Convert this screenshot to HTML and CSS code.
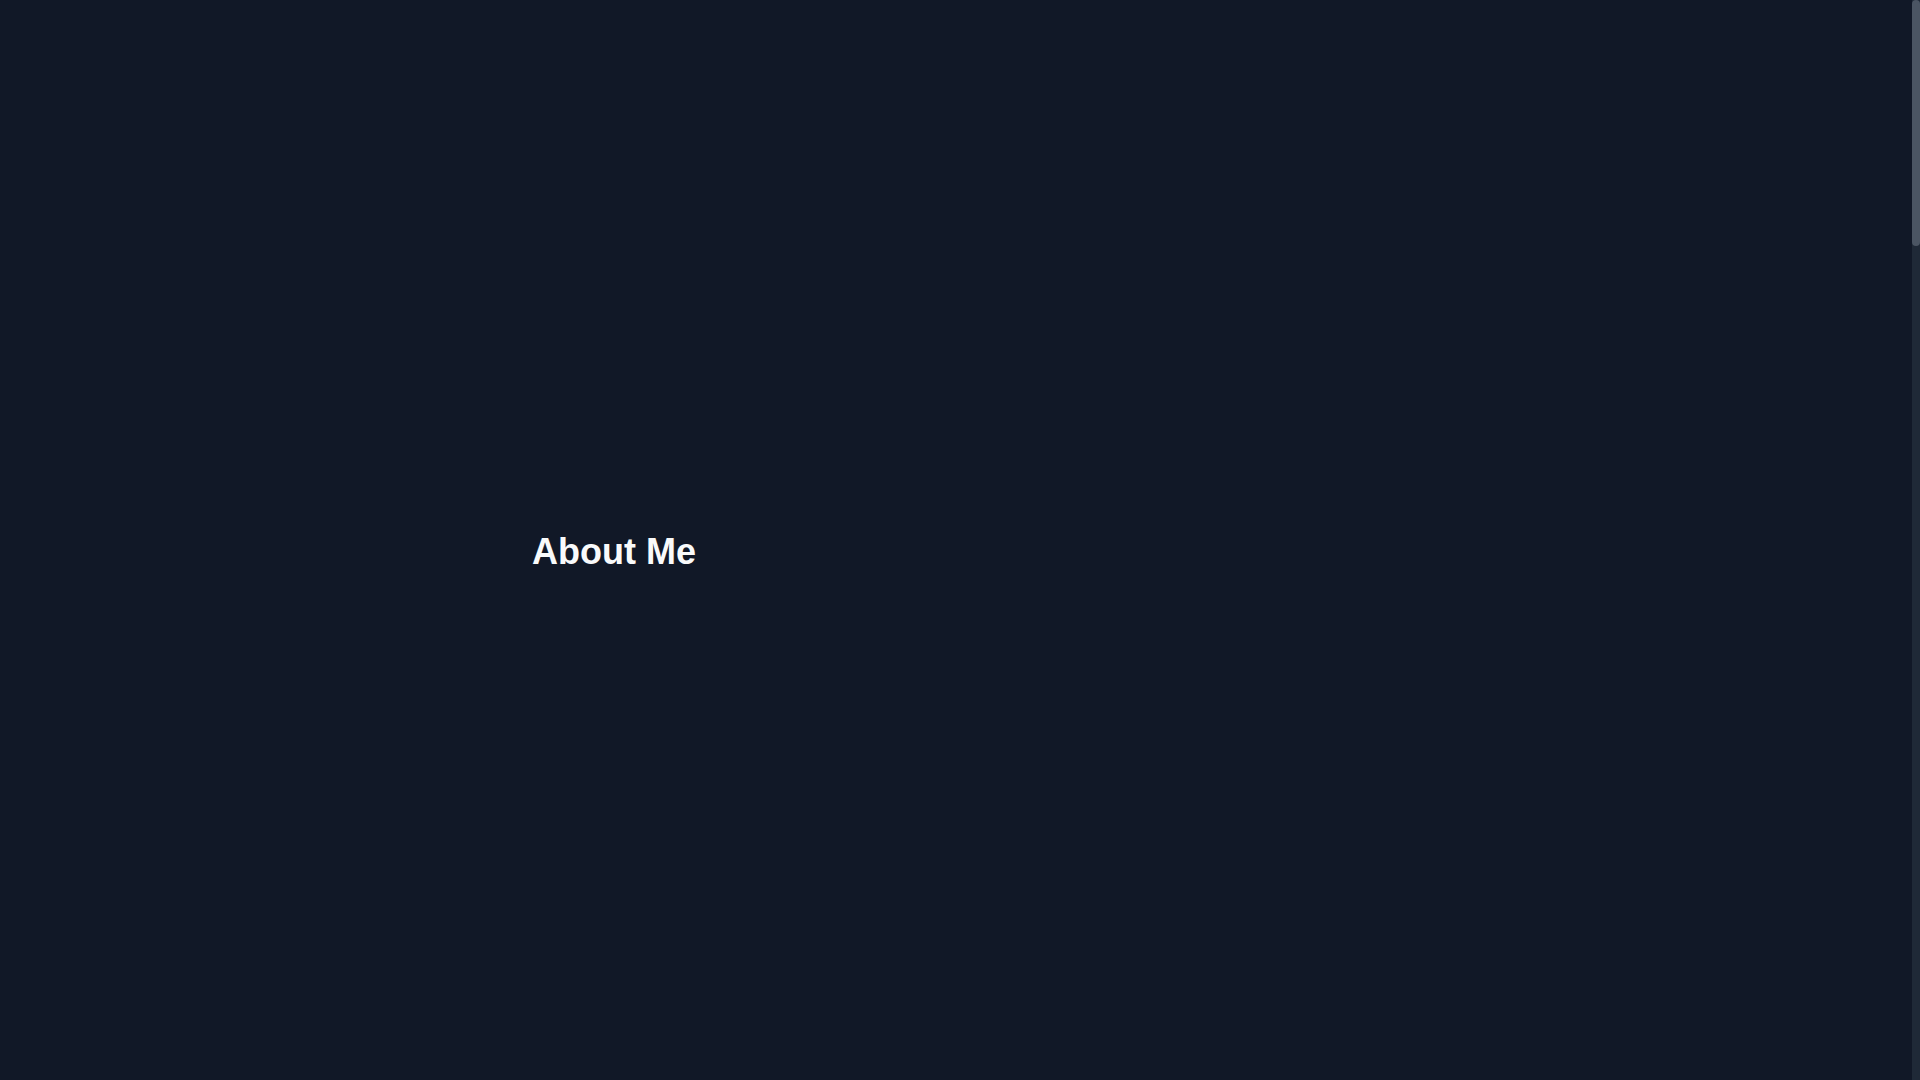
FILE: index.html
```html
<!DOCTYPE html>
<html lang="en">
<head>
    <meta charset="UTF-8">
    <meta name="viewport" content="width=device-width, initial-scale=1.0">
    <title>About Me</title>
    <link rel="stylesheet" href="styles.css">
</head>
<body>
    <div class="layout">
        <main class="page">
            <section class="about" id="about">
                <div class="container">
                    <h2 class="section-title">About Me</h2>
                </div>
            </section>
        </main>
        <div class="scrollbar">
            <div class="scrollbar-thumb"></div>
        </div>
    </div>
</body>
</html>
```

FILE: styles.css
```css
html, body {
    margin: 0;
    padding: 0;
    height: 100%;
    overflow: hidden;
}
* {
    box-sizing: border-box;
}
body {
    font-family: "Liberation Sans", Arial, sans-serif;
    background-color: #111827;
    color: #f9fafb;
}
.layout {
    display: flex;
    height: 100vh;
}
.page {
    flex: 1;
    min-width: 0;
}
.scrollbar {
    width: 8px;
    flex-shrink: 0;
    background-color: #1f2937;
}
.scrollbar-thumb {
    height: 246px;
    background-color: #4b5563;
    border-radius: 4px;
}
.container {
    max-width: 896px;
    margin: 0 auto;
    padding: 0 24px;
}
.about {
    padding-top: 532px;
}
.section-title {
    margin: 0;
    font-size: 36px;
    line-height: 40px;
    font-weight: 700;
    color: #f9fafb;
}
```
